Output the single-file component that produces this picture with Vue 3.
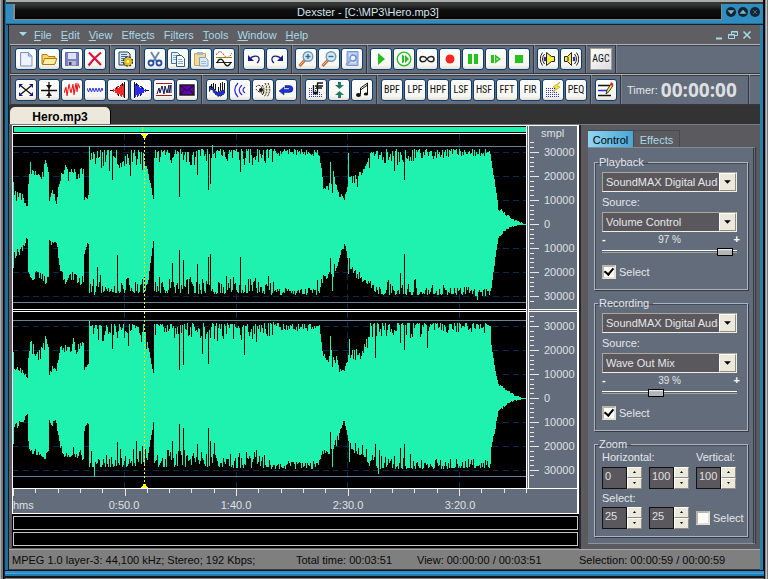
<script setup>
import { ref } from 'vue'

const menus = [
  ['', 'F', 'ile'], ['', 'E', 'dit'], ['', 'V', 'iew'], ['Effe', 'c', 'ts'],
  ['F', 'i', 'lters'], ['', 'T', 'ools'], ['', 'W', 'indow'], ['', 'H', 'elp'],
]

const lens = '<path d="M1.5 15 7 9" stroke="#c4703a" stroke-width="3"/><path d="M2 14 6.500 9.500" stroke="#f0b47c"/><circle cx="10" cy="5.500" r="4.800" fill="#cfeaf6" stroke="#7896b8" stroke-width="1.400"/>'
const speaker = '<path d="M1.500 5.500h3l4-4v13l-4-4h-3z" fill="#f7ee3c" stroke="#222"/><path d="M5 6v4" stroke="#222"/>'
const wave = '<path d="M10.500 6q1.500 2 0 4" stroke="#1c22a8" stroke-width="2" fill="none"/><path d="M11.500 3q4 5 0 10M13.500 1.500q4.500 6.500 0 13" stroke="#222" fill="none"/>'
const dots = '<path d="M1 6.500h9M1 8.500h9M1 10.500h11M1 12.500h13M1 14.500h13" stroke="#2630d8" stroke-dasharray="1 1"/>'

const art = {
  new: '<path d="M2.500 1.500h8l3.500 3.500v10H2.500z" fill="#dbe7fb" stroke="#8096c8"/><path d="M4 3h5v3l4 1v7H4z" fill="#eef4ff"/><path d="M10.500 1.500V5H14" fill="#b7caef" stroke="#8096c8"/>',
  open: '<path d="M1 13V3.500h5l1.500 2H14V13z" fill="#f6d768" stroke="#ae7b13"/><path d="M1.500 13.500 3.500 7.500H16L13.500 13.500z" fill="#fff0a0" stroke="#ae7b13"/>',
  save: '<path d="M1.500 1.500h13v13h-13z" fill="#7a83c8" stroke="#626ab0"/><path d="M4 2h8v6H4z" fill="#dfe4ee"/><path d="M4 10h8v4.500H4z" fill="#b9bdcb"/><path d="M5 11h2.500v3H5z" fill="#3b4270"/>',
  remove: '<path d="M2 1.500 14 14M14 1.500Q7 7 1.500 14.500" stroke="#d8143c" stroke-width="2.200" fill="none"/>',
  props: '<path d="M2 1h9l2 2v11H2z" fill="#d9e9f5" stroke="#263a50"/><path d="M4 3.500h6M4 5.500h7M4 7.500h7M4 9.500h4M4 11.500h3" stroke="#416c98"/><circle cx="11" cy="10.500" r="4.200" fill="none" stroke="#332a08" stroke-width="2" stroke-dasharray="2 1.300"/><circle cx="11" cy="10.500" r="2.600" fill="#fff" stroke="#e9bd13" stroke-width="2.600"/>',
  cut: '<path d="M4 1 10 11M12 1 6 11" stroke="#6584a8" stroke-width="1.800"/><circle cx="4" cy="12" r="2.500" fill="none" stroke="#274da4" stroke-width="1.800"/><circle cx="12" cy="12" r="2.500" fill="none" stroke="#274da4" stroke-width="1.800"/>',
  copy: '<path d="M1.500 1.500h6l3 3v8h-9z" fill="#e5f0fa" stroke="#4d6f91"/><path d="M6.500 4.500h5l3 3v8h-8z" fill="#fff" stroke="#315a7e"/><path d="M8 8.500h4M8 10.500h5M8 12.500h5" stroke="#7daed6"/><path d="M3 4.500h3M3 6.500h3M3 8.500h3" stroke="#7daed6"/>',
  paste: '<path d="M1.500 2.500h11v12h-11z" fill="#f7db91" stroke="#c8a75c"/><path d="M4 1h6v3H4z" fill="#a5b4d2"/><path d="M6.500 6.500h6l2.500 2.500v6H6.500z" fill="#dbe8fb" stroke="#85a0ca"/><path d="M8 10.500h5M8 12.500h5" stroke="#9fb9e0"/>',
  mix: '<path d="M0 4C3-.5 5-.5 8 4S13 7 16 2" fill="none" stroke="#e02222" stroke-dasharray="2 1"/><path d="M0 6.500h16" stroke="#8d8a20"/><path d="M0 11.500h16" stroke="#222"/><path d="M1 12C3 7 6 7 8 11.500S13 16 15 11" fill="none" stroke="#111" stroke-width="1.200"/>',
  undo: '<path d="M4 8C6.500 4 14 4 13 9q-.5 2-2 3" fill="none" stroke="#1a1f86" stroke-width="1.300"/><path d="M2 4v6h6z" fill="#1a1f86"/>',
  redo: '<path d="M12 8C9.500 4 2 4 3 9q.5 2 2 3" fill="none" stroke="#1a1f86" stroke-width="1.300"/><path d="M14 4v6H8z" fill="#1a1f86"/>',
  zoomin: lens + '<path d="M7.500 5.500h5M10 3v5" stroke="#31718c" stroke-width="1.400"/>',
  zoomout: lens + '<path d="M7.500 5.500h5" stroke="#31718c" stroke-width="1.400"/>',
  zoomfit: '<path d="M3 .5h11v14H3z" fill="#a9c0f0" stroke="#7f96d4"/><path d="M5 2.500h7v10H5z" fill="#d3e2fb"/><circle cx="9" cy="7" r="3" fill="#eaf6ff" stroke="#6d88cc" stroke-width="1.300"/><path d="m2 14 5-5" stroke="#8fa5c8" stroke-width="2"/>',
  play: '<path d="M5 2v12l7-6z" fill="#25bd1e"/>',
  playsel: '<circle cx="8" cy="8" r="6.800" fill="#fff" stroke="#25bd1e" stroke-width="1.300"/><path d="M6 3.500v9L8 11V5zM9 4v8l4-4z" fill="#25bd1e"/>',
  loop: '<path d="M8 8C6 4.500 1 4.500 1 8s5 3.500 7 0 7-3.500 7 0-5 3.500-7 0z" fill="none" stroke="#222" stroke-width="1.500"/>',
  record: '<circle cx="8" cy="8" r="4.500" fill="#fa2420"/>',
  pause: '<path d="M3 3h4v10H3zM9 3h4v10H9z" fill="#23c419"/>',
  step: '<path d="M3 4h3v8H3zM7 3.500v9l6-4.500z" fill="#23c419"/><path d="M8.500 7v2l2-1z" fill="#fff"/>',
  stop: '<path d="M4 4h8v8H4z" fill="#23c419"/>',
  spkin: '<g transform="translate(16 0) scale(-1 1)">' + wave + '</g><path d="M6.500 1.500v13l5-4h3v-5h-3z" fill="#f7ee3c" stroke="#222"/>',
  spkout: speaker + wave,
  shuffle: '<path d="M3 4 13 12M13 4 3 12" stroke="#111" stroke-width="1.300"/><path d="M1 2h4L1 6zM15 2h-4l4 4zM1 14h4l-4-4zM15 14h-4l4-4z" fill="#16168a"/>',
  center: '<path d="M0 8.500h16M8 0v16" stroke="#111" stroke-width="1.300"/><path d="M5 3h6L8 7zM5 14h6l-3-4z" fill="#111"/>',
  noise: '<path d="m0 11 2-6 1 9 2-12 2 9 2-9 1 11 2-12 1 9 1-8 2 4" fill="none" stroke="#ec1717" stroke-width="1.100"/>',
  normal: '<path d="m0 6 1.500 4L3 6l1.500 4L6 6l1.500 4L9 6l1.500 4L12 6l1.500 4L15 6l1 3" fill="none" stroke="#2835eb"/>',
  fadein: '<path d="M0 8.500h15M14.500 0v16" stroke="#111"/><path d="M3.500 7v3M5.500 6v5M7.500 4v9M9.500 5v7M11.500 2v13" stroke="#fa1f1f"/><path d="M4.500 8v1M6.500 7v4M8.500 6v6M10.500 4v10M12.500 4v9M13.500 2v13" stroke="#e83030"/><path d="M6.500 5v2M8.500 4v1M10.500 3v1M8.500 12v2M12.500 1v3" stroke="#111"/>',
  fadeout: '<path d="M16 8.500H1M1.500 0v16" stroke="#111"/><path d="M12.500 7v3M10.500 6v5M8.500 4v9M6.500 5v7M4.500 2v13" stroke="#2424ff"/><path d="M11.500 8v1M9.500 7v4M7.500 6v6M5.500 4v10M3.500 4v9M2.500 2v13" stroke="#3030e8"/><path d="M9.500 5v2M7.500 4v1M5.500 3v1M7.500 12v2M3.500 1v3" stroke="#111"/>',
  limit: '<path d="M0 1.500h16M0 13.500h16" stroke="#922"/><path d="m1 12 2-6 1 5 2-7 2 8 1-8 2 7 2-8v8l2-8v8" fill="none" stroke="#15154c"/>',
  mail: '<path d="M1 3h14v10H1z" fill="#6400b4" stroke="#1b1b1b" stroke-width="1.400"/><path d="m1 3.500 7 5 7-5M1 12.500l5-5M15 12.500l-5-5" stroke="#111" fill="none"/>',
  flanger: '<path d="M0 5q3-2 5 2t5 3 6-3v4q-4 4-7 3T4 9 0 10z" fill="#1a2fd2" stroke="#111" stroke-dasharray="2 1"/><path d="M2.500 2v4M4.500 1v6M6.500 2v6M9.500 5v5M11.500 1v8M13.500 0v8M15.500 1v6" stroke="#111"/>',
  echo: '<path d="M6 1Q-.5 8 6 15M10 3Q4.500 8 10 13M13 5q-4 3 0 6" stroke="#242ce0" fill="none" stroke-width="1.200"/>',
  reverb: '<path d="M1 5q3-4 6 1t0 7M1 7q2 3 6 4M7 3q4 5 0 10M10 1q4 7-1 14M13 1q4 7-1 14" stroke="#111" fill="none" stroke-dasharray="2 1"/><path d="M9 3q3 5-1 10M12 3q3 5-1 10" stroke="#d5bd33" fill="none" stroke-dasharray="1 1"/><circle cx="6" cy="8" r="2" fill="#181818"/>',
  reverse: '<path d="M7 3.500h4q4 0 4 3.500t-4 3.500H6V13L1 9l5-4v2.500h5q1-1-.5-1.500H7z" fill="#1b32cc" stroke="#15158d" stroke-width=".5"/>',
  tempo: dots + '<path d="M7 4h8M9 1h6M8 6h6M9.500 1v10M5.500 3v8" stroke="#111" stroke-width="1.300"/><ellipse cx="7.500" cy="11" rx="2.500" ry="1.500" fill="#111"/>',
  pitch: '<path d="M7 0h3v3h3L8.500 7 4 3h3zM8.500 9 13 13h-3v3H7v-3H4z" fill="#217b60"/>',
  notes: '<path d="M6.500 12V6L13.500 1v11M6.500 8l7-5" stroke="#111" fill="none"/><ellipse cx="4.500" cy="13" rx="2.500" ry="2" fill="#111"/><ellipse cx="12" cy="12" rx="2.200" ry="1.600" fill="#111"/>',
  flash: dots + '<path d="M15 0 8 5l3 1-4 5 8-6-3-1z" fill="#ffe928" stroke="#aa991c" stroke-width=".6"/>',
  pencil: '<path d="M0 3.500h12M0 13.500h13" stroke="#111" stroke-width="1.400"/><path d="M0 8.500h9" stroke="#2232ee" stroke-width="1.500"/><path d="m8 12 1-4 4-6 2 1.500-4 6z" fill="#f3e43d" stroke="#111" stroke-width=".8"/><path d="m13 0 2.500 2-1.500 2-2-1.500z" fill="#d22"/>',
}

const rowOne = [
  { items: ['new', 'open', 'save', 'remove'] },
  { items: ['props'] },
  { items: ['cut', 'copy', 'paste', 'mix'] },
  { items: ['undo', 'redo'] },
  { items: ['zoomin', 'zoomout', 'zoomfit'], tight: true },
  { items: ['play', 'playsel', 'loop', 'record', 'pause', 'step', 'stop'], tight: true },
  { items: ['spkin', 'spkout'], tight: true },
  { items: ['AGC'] },
]
const rowTwo = [
  { items: ['shuffle', 'center', 'noise', 'normal', 'fadein', 'fadeout', 'limit', 'mail'] },
  { items: ['flanger', 'echo', 'reverb', 'reverse'] },
  { items: ['tempo', 'pitch', 'notes'] },
  { items: ['BPF', 'LPF', 'HPF', 'LSF', 'HSF', 'FFT', 'FIR', 'flash', 'PEQ'] },
  { items: ['pencil'] },
]

/* Envelope rows: column, level above zero, level below zero, roughness */
const left = [
  [0, 42, 44, 0], [1, 33, 35, 9], [9, 30, 28, 6], [14, 20, 16, 4], [15, 42, 50, 4], [17, 62, 57, 12], [22, 54, 57, 12], [27, 48, 54, 13],
  [32, 66, 64, 5], [35, 54, 54, 3], [36, 26, 20, 4], [39, 36, 22, 6], [43, 24, 21, 5], [47, 50, 48, 8], [51, 60, 61, 12],
  [57, 52, 57, 12], [60, 60, 56, 12], [64, 54, 62, 10], [70, 57, 60, 3], [71, 26, 30, 4], [75, 30, 20, 2], [76, 78, 69, 0],
  [77, 74, 69, 18], [131, 74, 69, 18], [134, 56, 64, 4], [140, 26, 18, 2], [141, 74, 69, 18], [190, 75, 70, 18],
  [245, 75, 69, 14], [262, 75, 71, 7], [306, 75, 71, 7], [307, 66, 66, 8], [310, 42, 55, 8], [315, 38, 56, 10],
  [320, 54, 54, 12], [326, 31, 36, 6], [331, 30, 24, 6], [336, 48, 44, 12], [344, 50, 55, 13], [352, 58, 60, 14],
  [357, 72, 67, 14], [368, 75, 71, 16], [410, 75, 71, 10], [477, 75, 72, 6], [478, 64, 66, 3], [481, 46, 42, 2],
  [485, 17, 14, 3], [494, 10, 6, 2], [502, 4, 2, 1], [513, 0, 1, 0],
]
const right = [
  [0, 46, 46, 0], [1, 31, 34, 8], [9, 32, 28, 6], [14, 22, 18, 4], [15, 40, 46, 4], [17, 60, 58, 12], [22, 50, 58, 12], [27, 48, 58, 13],
  [32, 64, 62, 5], [35, 53, 54, 3], [36, 25, 24, 4], [39, 32, 29, 6], [43, 29, 28, 5], [47, 55, 54, 8], [51, 57, 59, 12],
  [57, 50, 59, 12], [60, 60, 58, 12], [64, 54, 61, 10], [70, 57, 62, 3], [71, 31, 34, 4], [75, 34, 27, 2], [76, 77, 69, 0],
  [77, 74, 69, 18], [131, 74, 69, 18], [134, 56, 62, 4], [140, 27, 26, 2], [141, 74, 69, 18], [190, 75, 69, 18],
  [245, 74, 70, 14], [262, 76, 71, 8], [306, 74, 71, 9], [307, 66, 62, 8], [310, 46, 58, 8], [315, 42, 56, 10],
  [320, 53, 56, 12], [326, 31, 40, 6], [331, 29, 24, 6], [336, 48, 52, 12], [344, 50, 57, 13], [352, 55, 60, 14],
  [357, 75, 70, 16], [368, 75, 71, 15], [410, 75, 71, 10], [477, 75, 70, 6], [478, 54, 50, 3], [482, 27, 31, 2],
  [485, 15, 14, 2], [494, 9, 7, 2], [502, 3, 3, 1], [513, 0, 1, 0],
]
const leftDips = { 81: [70, 71], 104: [60, 31], 99: [44, 68], 117: [48, 67], 115: [66, 54], 129: [54, 55], 159: [66, 39], 166: [27, 26], 170: [64, 36], 184: [49, 40], 195: [34, 33], 197: [40, 30], 199: [79, 65], 227: [52, 33], 255: [66, 52], 304: [74, 56], 317: [62, 34], 319: [31, 67], 335: [71, 50], 387: [72, 49], 391: [44, 30], 464: [70, 76] }
const rightDips = { 81: [70, 79], 104: [60, 44], 99: [49, 66], 115: [52, 66], 129: [66, 48], 159: [70, 43], 166: [28, 26], 170: [33, 30], 184: [66, 46], 189: [44, 60], 195: [34, 30], 197: [60, 43], 231: [43, 66], 317: [62, 34], 319: [31, 69], 336: [59, 64], 362: [40, 46], 365: [74, 76], 387: [55, 50], 391: [48, 46], 414: [50, 66] }

function wavePath(points, dips, zero, seed) {
  let state = seed
  const rand = () => (state = (state * 1103515245 + 12345) % 2147483648) / 2147483648
  let k = 0
  let d = ''
  for (let x = 0; x < 514; x++) {
    while (k < points.length - 2 && x >= points[k + 1][0]) k++
    const [x0, a0, b0, r0] = points[k]
    const [x1, a1, b1] = points[k + 1]
    const t = (x - x0) / (x1 - x0)
    const cut = () => r0 * Math.pow(rand(), r0 > 8 ? 2 : 1) * (rand() > 0.94 && r0 > 15 ? 1.5 : 1)
    let up = a0 + (a1 - a0) * t - cut()
    let down = b0 + (b1 - b0) * t - cut()
    if (dips[x]) [up, down] = dips[x]
    d += `M${x} ${zero - Math.max(0, Math.round(up))}h1V${zero + Math.max(1, Math.round(down))}h-1z`
  }
  return d
}

const channels = [
  { name: 'left', zero: 90, height: 175, wave: wavePath(left, leftDips, 90, 7) },
  { name: 'right', zero: 86, height: 176, wave: wavePath(right, rightDips, 86, 41) },
]
const gridX = [111, 223, 334, 446]
const gridY = [-72, -48, -24, 24, 48, 72]
const levels = ['30000', '20000', '10000', '0', '10000', '20000', '30000']
const marks = Array.from({ length: 34 }, (_, i) => i - 17)
const minorTicks = Array.from({ length: 24 }, (_, i) => i)

const tab = ref('Control')
const mixers = ref([
  { title: 'Playback', source: 'Volume Control', level: 97, on: true },
  { title: 'Recording', source: 'Wave Out Mix', level: 39, on: true },
])
const spins = ref({ h1: 0, h2: 100, v: 100, s1: 25, s2: 25 })
const spinRows = [['h1', 'h2', 'v'], ['s1', 's2']]
const zoomSelect = ref(false)
</script>

<template>
  <div class="window">
    <header class="title">
      <h1>Dexster - [C:\MP3\Hero.mp3]</h1>
      <div class="orbs">
        <button aria-label="Minimize"><svg viewBox="0 0 10 10"><path d="M2 3.500h6L5 7z" /></svg></button>
        <button aria-label="Maximize"><svg viewBox="0 0 10 10"><path d="M2 6.500h6L5 3z" /></svg></button>
        <button aria-label="Close"><svg viewBox="0 0 10 10"><path d="m3 3 4 4m0-4L3 7" /></svg></button>
      </div>
    </header>

    <div class="client">
      <nav class="menu">
        <svg class="caret" viewBox="0 0 8 5"><path d="M0 0h8L4 4z" /></svg>
        <a v-for="m in menus" :key="m.join('')" href="#">{{ m[0] }}<u>{{ m[1] }}</u>{{ m[2] }}</a>
        <div class="mdi">
          <button aria-label="Minimize document"><svg viewBox="0 0 10 10"><path d="M2 8.500h6" stroke-width="2" /></svg></button>
          <button aria-label="Restore document"><svg viewBox="0 0 10 10"><path d="M3.500 4V1.500h6v4H7M.5 4.500h6v4h-6z" /><path d="M3 2h7M0 5h7" /></svg></button>
          <button aria-label="Close document"><svg viewBox="0 0 10 10"><path d="m1.500 1.500 7 7m0-7-7 7" stroke-width="1.500" /></svg></button>
        </div>
      </nav>

      <div v-for="(row, r) in [rowOne, rowTwo]" :key="r" class="toolbar">
        <div v-for="(g, i) in row" :key="i" class="group" :class="{ tight: g.tight }">
          <button v-for="t in g.items" :key="t" class="tool" :class="{ agc: t === 'AGC' }" :aria-label="t">
            <svg v-if="art[t]" viewBox="0 0 16 16" fill="none" v-html="art[t]"></svg>
            <template v-else>{{ t }}</template>
          </button>
        </div>
        <div v-if="r === 1" class="group timer"><span>Timer:</span><output>00:00:00</output></div>
      </div>

      <div class="files"><button class="file">Hero.mp3</button></div>

      <main class="work">
        <section class="editor">
          <div class="scope">
            <div class="tracks">
              <div class="overview"><i></i></div>
              <svg
                v-for="c in channels" :key="c.name" class="channel" :viewBox="`0 0 514 ${c.height}`"
                :height="c.height" preserveAspectRatio="none" shape-rendering="crispEdges"
              >
                <g stroke="#042b52" stroke-dasharray="6 4">
                  <path v-for="y in gridY" :key="y" :d="`M0 ${c.zero + y + 0.5}h514`" />
                  <path v-for="x in gridX" :key="x" :d="`M${x + 0.5} 0v${c.height}`" />
                </g>
                <path :d="`M0 ${c.zero - 77.5}h514M0 ${c.zero + 78.5}h514`" stroke="#69839b" />
                <path :d="c.wave" fill="#1ff2ae" />
                <path :d="`M131.500 0v${c.height}`" stroke="#ff0" stroke-dasharray="2 2" />
                <path v-if="c.name === 'left'" d="M128 0h7v1h-1v1h-1v2h-3V2h-1V1h-1z" fill="#ff0" />
                <path v-else d="M128 176h7v-1h-1v-1h-1v-2h-3v2h-1v1h-1z" fill="#ff0" />
              </svg>
            </div>
            <div class="scales">
              <div v-for="(c, i) in channels" :key="c.name" class="scale">
                <svg class="ticks" width="12" :height="c.height + (i ? 0 : 8)" shape-rendering="crispEdges">
                  <path
                    v-for="m in marks" :key="m"
                    :d="`M1 ${c.zero + (i ? 0 : 8) + Math.round(m * 4.8) + 0.5}h${m % 5 ? 4 : 9}`"
                    stroke="#e8e8e8"
                  />
                </svg>
                <div class="levels">
                  <span v-if="i === 0" class="unit">smpl</span>
                  <span v-for="(l, n) in levels" :key="n">{{ l }}</span>
                </div>
              </div>
            </div>
            <div class="ruler">
              <svg viewBox="0 0 514 8" preserveAspectRatio="none" shape-rendering="crispEdges">
                <path
                  v-for="t in minorTicks" :key="t" :d="`M${Math.round(t * 22.3) + 0.5} 0v${t % 5 ? 4 : 7}`"
                  stroke="#e8e8e8"
                />
              </svg>
              <div class="times"><span>hms</span><span>0:50.0</span><span>1:40.0</span><span>2:30.0</span><span>3:20.0</span></div>
            </div>
          </div>
          <div class="meters"><div></div><div></div></div>
        </section>

        <aside class="side">
          <div class="tabs">
            <button v-for="t in ['Control', 'Effects']" :key="t" :class="{ on: tab === t }" @click="tab = t">{{ t }}</button>
          </div>
          <div class="panel">
            <fieldset v-for="m in mixers" :key="m.title" class="mixer">
              <legend>{{ m.title }}</legend>
              <div class="combo">
                <select :aria-label="m.title + ' device'"><option>SoundMAX Digital Audio</option></select>
                <svg viewBox="0 0 18 18"><path d="M5 7h8l-4 4z" /></svg>
              </div>
              <label class="caption" :for="m.title">Source:</label>
              <div class="combo">
                <select :id="m.title"><option>{{ m.source }}</option></select>
                <svg viewBox="0 0 18 18"><path d="M5 7h8l-4 4z" /></svg>
              </div>
              <div class="amount"><b>-</b><small>{{ m.level }} %</small><b>+</b></div>
              <input v-model="m.level" class="slider" type="range" min="0" max="100" :aria-label="m.title + ' level'">
              <label class="check"><input v-model="m.on" type="checkbox">Select</label>
            </fieldset>

            <fieldset class="zoom">
              <legend>Zoom</legend>
              <div class="heads"><span>Horizontal:</span><span>Vertical:</span></div>
              <template v-for="(row, i) in spinRows" :key="i">
                <div v-if="i" class="heads"><span>Select:</span></div>
                <div class="spins">
                  <div v-for="k in row" :key="k" class="spin">
                    <input v-model="spins[k]" type="text" :aria-label="'Zoom ' + k">
                    <button aria-label="Increase" @click="spins[k]++"><svg viewBox="0 0 5 3"><path d="M1 2h3L2.500 0z" /></svg></button>
                    <button aria-label="Decrease" @click="spins[k]--"><svg viewBox="0 0 5 3"><path d="M1 0h3L2.500 2z" /></svg></button>
                  </div>
                  <label v-if="i" class="check"><input v-model="zoomSelect" type="checkbox">Select</label>
                </div>
              </template>
            </fieldset>
          </div>
        </aside>
      </main>

      <footer class="status">
        <span>MPEG 1.0 layer-3: 44,100 kHz; Stereo; 192 Kbps;</span>
        <span>Total time: 00:03:51</span>
        <span>View: 00:00:00 / 00:03:51</span>
        <span>Selection: 00:00:59 / 00:00:59</span>
      </footer>
    </div>
  </div>
</template>

<style>
body { margin: 0; background: #1b1c20; }
</style>

<style scoped>
* { box-sizing: border-box; }
button, input, select { font: inherit; color: inherit; padding: 0; margin: 0; border: 0; background: none; border-radius: 0; }
svg { display: block; }
.window {
  min-height: 100vh; padding: 0 8px 10px 9px; display: flex; flex-direction: column;
  font: 11px/14px "Liberation Sans", Arial, sans-serif; color: #e3e6ea;
  background:
    linear-gradient(#14161c 0 1px, #2d8fc9 1px 3px, #3ca4e0 3px 4px, #1f7bb0 4px 6px, #14161c 6px 8px, #77787c 8px) left 5px bottom 0 / calc(100% - 9px) 10px no-repeat,
    linear-gradient(90deg, #b0b0ae 0 1px, #77787c 1px 3px, #0b0b0e 3px 4px, #20203c 4px 5px, #1f6f98 5px 8px, #101c26 8px 9px) left / 9px 100% no-repeat,
    linear-gradient(90deg, #2c7fac 0 3px, #0b0b0e 3px 5px, #8c8d90 5px 6px, #c3c3c3 6px 7px, #77787c 7px) right / 8px 100% no-repeat,
    #2c7fac;
}
.title {
  display: flex; height: 25px; padding: 4px 0; margin: 0 -3px; border-bottom: 1px solid #16202a;
  background: linear-gradient(#a9ada4 0 2px, #33363a 2px 4px, #2f8dc0 4px 23px, #2a6f96 23px);
}
h1 {
  flex: 1; margin: 0 0 0 7px; font-size: 11px; font-weight: 400; line-height: 16px; text-align: center;
  color: #d6e6ee; border: 1px solid #888; border-width: 0 1px 1px 2px; background: linear-gradient(#3a3a3a, #101010 40%, #060606);
}
.orbs { display: flex; gap: 2px; padding: 3px 3px 0 4px; }
.orbs button { width: 10px; height: 10px; border-radius: 50%; background: #14252f; }
.orbs path { fill: #79b7d6; stroke: #79b7d6; stroke-width: .5; }
.client { flex: 1; display: flex; flex-direction: column; background: #5c5b60; }
.menu { display: flex; align-items: center; gap: 9px; height: 19px; padding: 0 8px 0 10px; color: #a9d9e8; background: #5f5e63; }
.menu a { color: inherit; text-decoration: none; }
.caret { width: 8px; height: 5px; margin-right: -2px; fill: #a9d9e8; }
.mdi { margin-left: auto; display: flex; gap: 4px; }
.mdi svg { width: 10px; height: 10px; fill: none; stroke: #a9d9e8; }
.toolbar {
  display: flex; height: 30px; margin-left: 1px; border-top: 1px solid #aeb2b9; border-bottom: 1px solid #34363c;
  background: #636c7b; box-shadow: inset 1px 1px #3b3e46;
}
.toolbar + .toolbar { height: 31px; }
.group { display: flex; gap: 1px; align-items: center; padding: 0 3px 0 4px; border-right: 1px solid #30343c; box-shadow: 1px 0 #7a8290; }
.tight { padding-left: 3px; }
.group:first-child { padding-left: 5px; }
.tool {
  display: grid; place-items: center; width: 22px; height: 22px; color: #111;
  font: 10px/20px "Roboto Condensed", Roboto, "Liberation Sans", sans-serif;
  background: linear-gradient(#fff, #f8f7f2 80%, #e2dfd4); border: 1px solid #0b3c70; border-radius: 3px;
}
.tool svg { width: 16px; height: 16px; }
.agc { border: 1px solid #a79f92; border-radius: 0; background: linear-gradient(135deg, #fff, #dcdce2); }
.timer { padding: 0 11px 0 6px; gap: 3px; }
.timer output { font: 700 19px/24px "Open Sans", "Noto Sans", sans-serif; color: #dedfe2; }
.files { display: flex; align-items: flex-end; height: 19px; background: #333; }
.file {
  width: 100px; height: 17px; margin-left: 1px; color: #000; font-weight: 700; font-size: 12px; line-height: 21px;
  background: #ece9dc; border-radius: 5px 5px 0 0; box-shadow: 1px 0 #000;
}
.work { flex: 1; display: flex; border-top: 1px solid #77787c; }
.editor { flex: 1; min-width: 0; margin: 0 0 1px 3px; display: flex; flex-direction: column; }
.scope {
  flex: 1; display: grid; grid-template-columns: 1fr 50px; grid-template-rows: auto 1fr;
  border: 1px solid #fff; border-width: 1px 2px 1px 1px; background: #636c7b;
}
.tracks { background: #000; }
.overview { height: 8px; padding: 1px 0 0 1px; border-bottom: 1px solid #fff; }
.overview::before { content: ""; display: block; height: 5px; background: #1ff2ae; }
.overview i { display: block; width: 1px; height: 5px; margin: -5px 0 0 25%; background: #cfee3c; }
.channel { width: 100%; }
.channel + .channel { border-top: 3px double #fff; box-sizing: content-box; }
.scales { border-left: 3px double #fff; margin-left: -1px; }
.scale { display: flex; }
.scale + .scale { border-top: 3px double #fff; }
.levels { display: flex; flex-direction: column; color: #dde0e4; }
.levels span { height: 24px; line-height: 24px; padding-left: 3px; }
.levels .unit { height: 14px; line-height: 14px; padding-left: 0; }
.scale + .scale .levels { padding-top: 2px; }
.ruler { grid-column: 1 / -1; display: grid; grid-template-columns: 1fr 50px; align-content: start; border-top: 1px solid #fff; height: 25px; }
.ruler svg { width: 100%; height: 8px; }
.times { grid-column: 1; display: grid; grid-template-columns: 55fr 112fr 112fr 112fr 112fr 11fr; margin-top: 1px; color: #dde0e4; text-align: center; }
.times span:first-child { text-align: left; }
.meters { display: grid; gap: 2px; padding: 2px 1px; background: #000; }
.meters div { height: 14px; border: 1px solid #c8c8c8; }
.side { width: 181px; padding: 5px 4px 5px 7px; border-left: 2px solid #26282d; background: #5b5a5f; display: flex; flex-direction: column; }
.tabs { display: flex; height: 17px; color: #a9d9e8; }
.tabs button { width: 46px; font-size: 11px; line-height: 18px; border: 1px solid #48484d; border-width: 1px 1px 0 0; }
.tabs .on { color: #000; background: linear-gradient(90deg, #8fd6f5, #4aa6d6); }
.panel { flex: 1; padding: 7px 5px 4px 6px; background: #636c7b; border-right: 3px double #343840; border-bottom: 1px solid #8d939d; border-top: 1px solid #858a93; }
fieldset { min-width: 0; margin: 0; padding: 0 7px; border: 1px solid #aeb5c0; box-shadow: 1px 1px #343a44, inset 1px 1px #434a56; }
legend { margin-left: -4px; padding: 0 4px 0 1px; line-height: 14px; }
.mixer { height: 135px; margin-bottom: 6px; }
.combo { display: flex; height: 20px; border: 1px solid #aaa798; border-right-color: #f0efe4; border-bottom-color: #f0efe4; position: relative; margin-right: 3px; }
.mixer legend + .combo { margin-top: 3px; }
.combo select { appearance: none; width: 100%; padding: 0 18px 0 3px; background: #5a585d; color: #e6e6e6; outline: 0; overflow: hidden; }
.combo svg { position: absolute; right: 0; top: 0; width: 17px; height: 18px; background: #ece9dc; border: 1px solid #fff; border-color: #fff #8f8c80 #8f8c80 #fff; pointer-events: none; }
.caption { display: block; height: 20px; line-height: 21px; }
.amount { display: flex; justify-content: space-between; height: 15px; line-height: 16px; }
.amount small { font-size: 10px; }
.amount b { color: #fff; line-height: 14px; }
.slider { appearance: none; display: block; width: 135px; height: 9px; background: linear-gradient(#fff 0 1px, #5a6270 1px 2px, #a7a596 2px 3px) center / 100% 3px no-repeat; }
.slider::-webkit-slider-thumb { appearance: none; width: 16px; height: 8px; border: 1px solid #000; background: linear-gradient(#fff, #b4b4b4 30%); }
.check { display: flex; align-items: center; gap: 3px; height: 15px; margin-top: 8px; }
.check input {
  appearance: none; width: 14px; height: 14px; background: #fff; border: 2px solid #e4e1d2; border-top-color: #b9b6a8; border-left-color: #b9b6a8;
  display: grid; place-items: center;
}
.check input:checked::after { content: ""; width: 4px; height: 7px; margin-top: -3px; border: solid #000; border-width: 0 2px 2px 0; transform: rotate(40deg); }
.zoom { height: 100px; }
.heads { display: grid; grid-template-columns: 94px 1fr; height: 18px; line-height: 18px; }
legend + .heads { height: 16px; line-height: 12px; }
.spins { display: flex; gap: 7px; }
.spins .check { height: 22px; margin: 0; }
.spin { display: grid; grid-template-columns: 25px 15px; grid-template-rows: 11px 11px; }
.spin input { grid-row: 1 / 3; width: 25px; padding: 0 0 4px 2px; border: 1px solid #111; background: #5a585d; color: #e0e0e0; }
.spin button { display: grid; place-items: center; background: #ece9dc; border: 1px solid #fff; border-right-color: #8f8c80; border-bottom-color: #8f8c80; }
.spin svg { width: 5px; height: 3px; }
.status {
  display: grid; grid-template-columns: 284px 121px 162px 1fr; height: 21px; padding: 0 3px; line-height: 20px;
  color: #0a0a0a; background: #7f7f7f; border-top: 1px solid #a8a8a8; border-bottom: 1px solid #3c3c3e; white-space: nowrap;
}
</style>
